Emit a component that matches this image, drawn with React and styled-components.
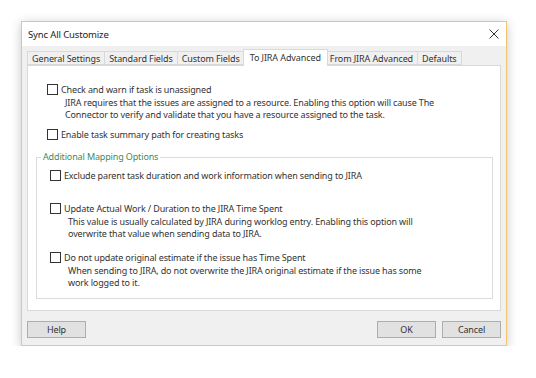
import React from 'react'
import styled, { createGlobalStyle } from 'styled-components'

const GlobalStyle = createGlobalStyle`
  body {
    margin: 0;
    background: #fff;
    font-family: "Noto Sans", "Open Sans", sans-serif;
    color: #333;
    letter-spacing: -0.14px;
  }
`

const Window = styled.div`
  margin: 21px 0 0 21px;
  width: 486px;
  height: 325px;
  box-sizing: border-box;
  border: 1px solid #f1c56f;
  background: #f0f0f0;
  box-shadow: 0 2px 10px rgba(0, 0, 0, 0.22);
  display: flex;
  flex-direction: column;
`

const TitleBar = styled.div`
  height: 24px;
  background: #fff;
  display: flex;
  align-items: center;
  justify-content: space-between;
  padding: 0 7px 0 6px;
  font-size: 9.5px;
  color: #222;
`

const Close = styled.svg`
  width: 10px;
  height: 10px;
`

const Body = styled.div`
  flex: 1;
  display: flex;
  flex-direction: column;
  padding: 4px 5px 0;
`

const TabStrip = styled.div`
  display: flex;
  align-items: flex-end;
  height: 15px;
`

const Tab = styled.div`
  box-sizing: border-box;
  height: ${p => (p.$active ? '17px' : '14px')};
  margin-bottom: ${p => (p.$active ? '-1px' : '0')};
  margin-left: ${p => (p.$active ? '-2px' : '0')};
  margin-right: ${p => (p.$active ? '-2px' : '0')};
  padding: ${p => (p.$active ? '0 6px 2px' : '0 4px')};
  border: 1px solid #d9d9d9;
  border-bottom: ${p => (p.$active ? 'none' : '1px solid #d9d9d9')};
  border-left: ${p => (p.$first || p.$active ? '1px solid #d9d9d9' : 'none')};
  background: ${p => (p.$active ? '#fff' : '#f0f0f0')};
  z-index: ${p => (p.$active ? 1 : 0)};
  font-size: 9px;
  letter-spacing: -0.1px;
  display: flex;
  align-items: center;
  white-space: nowrap;
`

const Panel = styled.div`
  height: 246px;
  box-sizing: border-box;
  background: #fff;
  border: 1px solid #d9d9d9;
  padding: 17px 7px 0 19px;
`

const Option = styled.label`
  display: flex;
  align-items: center;
  gap: 3px;
  height: 12px;
  font-size: 9px;
  margin-top: ${p => p.$gap || 0}px;
  white-space: nowrap;
`

const Box = styled.span`
  width: 11px;
  height: 11px;
  box-sizing: border-box;
  border: 1px solid #333;
  background: #fff;
  flex: none;
`

const Note = styled.div`
  padding-left: 18px;
  margin-top: 2px;
  font-size: 9px;
  line-height: 12px;
  color: #333;
`

const Group = styled.fieldset`
  margin: 11px 0 0 -11px;
  width: 457px;
  box-sizing: border-box;
  border: 1px solid #dcdcdc;
  padding: 0 0 9px 13px;
  min-inline-size: 0;
`

const Legend = styled.legend`
  margin-left: -9px;
  padding: 0 2px;
  font-size: 9px;
  line-height: 12px;
  color: #3f8a62;
`

const Footer = styled.div`
  display: flex;
  align-items: center;
  padding: 10px 0 0 0;
  gap: 6px;
`

const Button = styled.button`
  width: 59px;
  height: 17px;
  box-sizing: border-box;
  border: 1px solid #adadad;
  background: #e1e1e1;
  font-family: inherit;
  letter-spacing: inherit;
  font-size: 9px;
  color: #333;
  padding: 0;
  margin-left: ${p => (p.$push ? 'auto' : '0')};
`

const tabs = [
  'General Settings',
  'Standard Fields',
  'Custom Fields',
  'To JIRA Advanced',
  'From JIRA Advanced',
  'Defaults',
]

export default function App() {
  return (
    <>
      <GlobalStyle />
      <Window>
        <TitleBar>
          <span>Sync All Customize</span>
          <Close viewBox="0 0 10 10">
            <path d="M0.5 0.5 L9.5 9.5 M9.5 0.5 L0.5 9.5" stroke="#333" strokeWidth="1" />
          </Close>
        </TitleBar>
        <Body>
          <TabStrip>
            {tabs.map((t, i) => (
              <Tab key={t} $first={i === 0} $active={i === 3}>
                {t}
              </Tab>
            ))}
          </TabStrip>
          <Panel>
            <Option>
              <Box />
              Check and warn if task is unassigned
            </Option>
            <Note>
              JIRA requires that the issues are assigned to a resource. Enabling this option will cause The
              <br />
              Connector to verify and validate that you have a resource assigned to the task.
            </Note>
            <Option $gap={7}>
              <Box />
              Enable task summary path for creating tasks
            </Option>
            <Group>
              <Legend>Additional Mapping Options</Legend>
              <Option $gap={6}>
                <Box />
                Exclude parent task duration and work information when sending to JIRA
              </Option>
              <Option $gap={21}>
                <Box />
                Update Actual Work / Duration to the JIRA Time Spent
              </Option>
              <Note>
                This value is usually calculated by JIRA during worklog entry. Enabling this option will
                <br />
                overwrite that value when sending data to JIRA.
              </Note>
              <Option $gap={11}>
                <Box />
                Do not update original estimate if the issue has Time Spent
              </Option>
              <Note>
                When sending to JIRA, do not overwrite the JIRA original estimate if the issue has some
                <br />
                work logged to it.
              </Note>
            </Group>
          </Panel>
          <Footer>
            <Button>Help</Button>
            <Button $push>OK</Button>
            <Button>Cancel</Button>
          </Footer>
        </Body>
      </Window>
    </>
  )
}
